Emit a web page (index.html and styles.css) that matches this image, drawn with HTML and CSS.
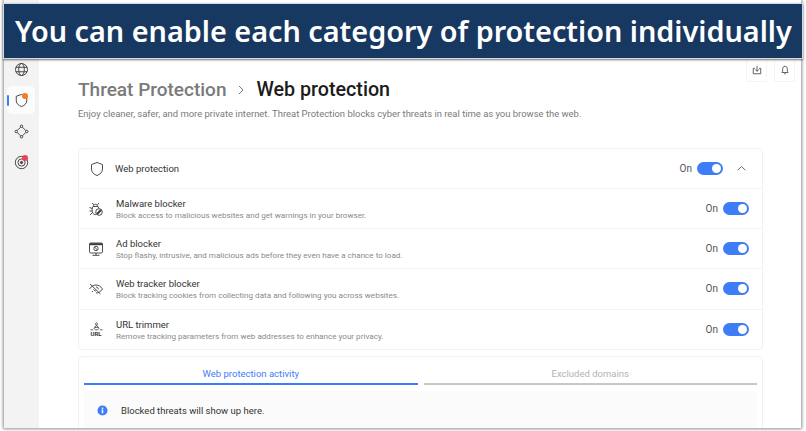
FILE: index.html
```html
<!DOCTYPE html>
<html lang="en">
<head>
<meta charset="utf-8">
<title>Web protection</title>
<link rel="stylesheet" href="styles.css">
</head>
<body>
<div class="banner">You can enable each category of protection individually</div>
<div class="app">
  <aside class="sidebar">
    <div class="nav-item">
      <svg class="nav-icon" viewBox="0 0 16 16"><circle cx="8" cy="8" r="6.4"/><ellipse cx="8" cy="8" rx="3" ry="6.4"/><path d="M2 5.6h12M2 10.4h12"/></svg>
    </div>
    <div class="nav-item nav-active">
      <span class="nav-marker"></span>
      <svg class="nav-icon" viewBox="0 0 16 16"><path d="M8 1.5l5.600 2v4.600c0 3.200-2.400 5.200-5.600 6.400-3.200-1.200-5.600-3.200-5.600-6.400V3.500z"/></svg>
      <span class="nav-dot dot-orange"></span>
    </div>
    <div class="nav-item">
      <svg class="nav-icon" viewBox="0 0 16 16"><circle cx="8" cy="2.400" r="1.300"/><circle cx="2.400" cy="8" r="1.300"/><circle cx="13.600" cy="8" r="1.300"/><circle cx="8" cy="13.600" r="1.300"/><path d="M7 3.400L3.400 7M9 3.400L12.600 7M3.400 9L7 12.600M12.600 9L9 12.600"/></svg>
    </div>
    <div class="nav-item">
      <svg class="nav-icon" viewBox="0 0 16 16"><circle cx="8" cy="8" r="6.600"/><circle cx="8" cy="8" r="3.800"/><circle cx="8" cy="8" r="1.200" class="solid"/></svg>
      <span class="nav-dot dot-red"></span>
    </div>
  </aside>
  <main class="main">
    <div class="top-actions">
      <span class="top-btn"><svg class="top-icon" viewBox="0 0 12 12"><path d="M6 1v6.500M3.800 5.300L6 7.500l2.200-2.200M3.500 4H1.500v6.500h9V4H8.500"/></svg></span>
      <span class="top-btn"><svg class="top-icon" viewBox="0 0 12 12"><path d="M6 1.500c-1.800 0-2.800 1.300-2.800 3v3L2.300 9h7.400l-.9-1.500v-3c0-1.700-1-3-2.800-3zM5 10.500h2"/></svg></span>
    </div>
    <h1 class="crumbs">
      <span class="crumb-parent">Threat Protection</span>
      <svg class="crumb-sep" viewBox="0 0 8 10"><path d="M2 1l4 4-4 4"/></svg>
      <span class="crumb-current">Web protection</span>
    </h1>
    <p class="intro">Enjoy cleaner, safer, and more private internet. Threat Protection blocks cyber threats in real time as you browse the web.</p>

    <section class="card">
      <div class="row row-head">
        <svg class="row-icon head-icon" viewBox="0 0 16 16"><path d="M8 1.500l5.500 2v4.600c0 3.200-2.400 5.200-5.500 6.400-3.100-1.200-5.500-3.200-5.500-6.400V3.500z"/></svg>
        <span class="head-title">Web protection</span>
        <span class="state">On</span>
        <span class="toggle"></span>
        <svg class="chevron" viewBox="0 0 12 8"><path d="M1.500 6L6 1.700 10.500 6"/></svg>
      </div>
      <div class="row">
        <svg class="row-icon" viewBox="0 0 16 16"><path d="M5 5.500h5l1 2M5 5.500C3.800 7 3.800 10.500 5 12.300c.8 1 2 1.400 3 1.200M5.500 5.500C5.500 4 6.500 3.300 7.500 3.300s2 .7 2 2.200M4 2l2 1.800M11 2L9.300 3.800M1.500 6.500l2.800 1M1.500 10h2.500M2 14l2.500-2.500"/><circle cx="11" cy="11" r="3.300"/><path d="M9 13l4-4" class="thick"/></svg>
        <div class="row-text"><div class="row-title">Malware blocker</div><div class="row-desc">Block access to malicious websites and get warnings in your browser.</div></div>
        <span class="state">On</span><span class="toggle"></span>
      </div>
      <div class="row">
        <svg class="row-icon" viewBox="0 0 16 16"><rect x="1.500" y="2" width="13" height="10" rx="1.200"/><path d="M1.500 3.200h13" class="thick"/><circle cx="8" cy="7.500" r="2.200"/><path d="M6.500 6l3 3M4.500 14.300h7M8 12v2.300"/></svg>
        <div class="row-text"><div class="row-title">Ad blocker</div><div class="row-desc">Stop flashy, intrusive, and malicious ads before they even have a chance to load.</div></div>
        <span class="state">On</span><span class="toggle"></span>
      </div>
      <div class="row">
        <svg class="row-icon" viewBox="0 0 16 16"><path d="M1.500 8C3.500 5 5.800 4 8 4s4.500 1 6.500 4c-2 3-4.300 4-6.500 4M2 3l10.500 10M5.500 8.200c.6 1.200 1.400 1.800 2.500 1.800M8 6c1.300 0 2.300 1 2.300 2.300M4 11l1-1"/></svg>
        <div class="row-text"><div class="row-title">Web tracker blocker</div><div class="row-desc">Block tracking cookies from collecting data and following you across websites.</div></div>
        <span class="state">On</span><span class="toggle"></span>
      </div>
      <div class="row">
        <span class="url-icon">
          <svg class="url-glyph" viewBox="0 0 16 9"><circle cx="8" cy="1.800" r="1.100"/><path d="M8 3l-2.800 4.200M8 3l2.800 4.200M1.500 8h3M6 8h4M11.500 8h3M5.500 5.400h5"/></svg>
          <span class="url-label">URL</span>
        </span>
        <div class="row-text"><div class="row-title">URL trimmer</div><div class="row-desc">Remove tracking parameters from web addresses to enhance your privacy.</div></div>
        <span class="state">On</span><span class="toggle"></span>
      </div>
    </section>

    <section class="card activity">
      <div class="tabs">
        <div class="tab tab-active">Web protection activity</div>
        <div class="tab">Excluded domains</div>
      </div>
      <div class="notice">
        <svg class="info" viewBox="0 0 12 12"><circle cx="6" cy="6" r="5.500"/><rect x="5.200" y="5" width="1.600" height="4" class="glyph"/><rect x="5.200" y="2.800" width="1.600" height="1.500" class="glyph"/></svg>
        <span>Blocked threats will show up here.</span>
      </div>
    </section>
  </main>
</div>
</body>
</html>
```
FILE: styles.css
```css
* { box-sizing: border-box; }
html, body { margin: 0; padding: 0; width: 806px; height: 431px; overflow: hidden; background: #fff; }
body { font-family: Roboto, "Noto Sans", sans-serif; color: #222; position: relative; }

.banner {
  position: absolute; left: 3px; top: 3px; width: 800px; height: 56px; z-index: 5;
  background: #173861; color: #fff; border: 1px solid #d5dae2;
  box-shadow: 0 1px 2px rgba(0,0,0,.55);
  font-family: "Noto Sans", sans-serif; font-size: 28.800px; font-weight: 600;
  line-height: 54px; padding-left: 11px; white-space: nowrap;
}

.app {
  display: flex; width: 797px; height: 428px; margin-left: 4px; overflow: hidden;
  background: #fff;
  box-shadow: 0 0 3px 1px rgba(0,0,0,.45);
}

.sidebar { width: 35px; flex: none; background: #f3f3f3; padding: 55px 0 0 3px; display: flex; flex-direction: column; gap: 3px; }
.nav-item { position: relative; width: 28px; height: 28px; display: flex; align-items: center; justify-content: center; border-radius: 5px; }
.nav-active { background: #fcfcfc; }
.nav-marker { position: absolute; left: -0.5px; top: 9px; width: 2px; height: 11px; background: #3f7df6; border-radius: 1px; }
.nav-icon { width: 15px; height: 15px; fill: none; stroke: #3c3c3c; stroke-width: 1; }
.nav-icon .solid { fill: #3c3c3c; }
.nav-dot { position: absolute; left: 15px; top: 7px; width: 6px; height: 6px; border-radius: 50%; }
.dot-orange { background: #f57c20; }
.dot-red { background: #ef4058; }

.main { position: relative; flex: 1; min-width: 0; padding: 75px 0 0 39px; }
.top-actions { position: absolute; top: 59px; right: 6px; display: flex; gap: 7px; }
.top-btn { width: 21px; height: 23px; display: flex; align-items: center; justify-content: center; border: 1px solid #f4f4f4; border-top: 0; border-radius: 0 0 3px 3px; }
.top-icon { width: 10px; height: 10px; fill: none; stroke: #444; stroke-width: 1; }

.crumbs { margin: 0; display: flex; align-items: center; height: 30px; font-size: 19px; font-weight: 500; line-height: 30px; }
.crumb-parent { color: #7a7a7a; }
.crumb-sep { width: 8px; height: 10px; margin: 0 11px; fill: none; stroke: #777; stroke-width: 1; }
.crumb-current { color: #1c1c1c; font-size: 19.700px; }
.intro { margin: 2px 0 0; font-size: 9.450px; line-height: 14px; color: #7a7a7a; white-space: nowrap; }

.card { width: 685px; border: 1px solid #f1f1f1; border-radius: 4px; background: #fff; }
.main > .card:first-of-type { margin-top: 27px; }
.row { display: flex; align-items: center; height: 40.200px; padding: 0 13px 0 9px; border-top: 1px solid #f3f3f3; }
.row-head { border-top: 0; height: 39px; padding-right: 15px; }
.row-icon { width: 16px; height: 16px; flex: none; fill: none; stroke: #3a3a3a; stroke-width: .9; margin-right: 12px; }
.row-icon .thick { stroke-width: 2; }
.head-icon { margin: 0 10px 0 1px; }
.head-title { flex: 1; font-size: 9.500px; color: #333; }
.row-text { flex: 1; min-width: 0; padding-top: 1px; }
.row-title { font-size: 9.500px; line-height: 12px; color: #333; }
.row-desc { font-size: 8.100px; line-height: 10px; color: #8a8a8a; white-space: nowrap; }
.state { font-size: 10px; color: #555; margin-right: 5px; }
.toggle { position: relative; width: 26px; height: 13px; flex: none; border-radius: 7px; background: #3f7df6; }
.toggle::after { content: ""; position: absolute; right: 2px; top: 2px; width: 9px; height: 9px; border-radius: 50%; background: #fff; }
.chevron { width: 11px; height: 7px; margin-left: 13px; flex: none; fill: none; stroke: #555; stroke-width: 1; }
.url-icon { width: 16px; margin-right: 12px; flex: none; display: flex; flex-direction: column; align-items: center; }
.url-glyph { width: 15px; height: 9px; fill: none; stroke: #3a3a3a; stroke-width: .8; }
.url-label { font-size: 6px; line-height: 6px; font-weight: 700; color: #333; }

.activity { margin-top: 6px; height: 90px; padding: 5px 5px 0; }
.tabs { display: flex; gap: 6px; }
.tab { flex: 1; height: 23px; font-size: 9.500px; line-height: 13px; padding-top: 5px; text-align: center; color: #b3b3b3; border-bottom: 2px solid #c8c8c8; }
.tab-active { color: #3f7df6; border-bottom-color: #3f7df6; }
.notice { display: flex; align-items: center; height: 40px; margin-top: 6px; padding-left: 13px; background: #fbfbfb; border-radius: 3px; font-size: 9.500px; color: #333; gap: 13px; }
.info { width: 11px; height: 11px; flex: none; fill: #3f7df6; }
.info .glyph { fill: #fff; }
```
